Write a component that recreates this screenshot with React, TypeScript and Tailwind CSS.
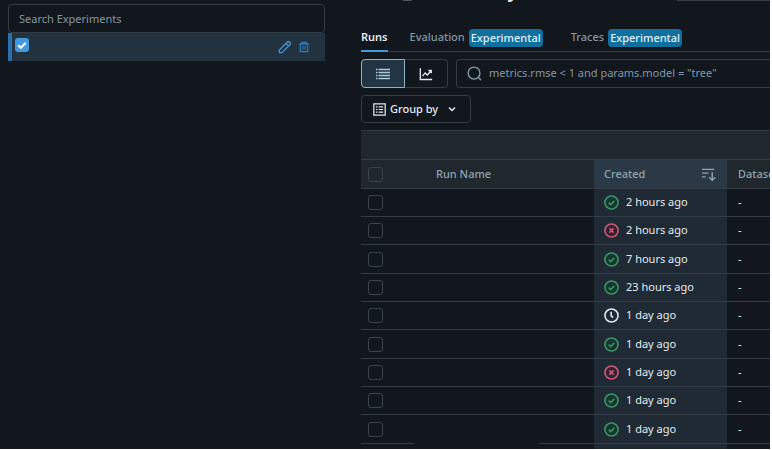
import type { ReactNode } from "react";

type Status = "ok" | "failed" | "scheduled";

const runs: { status: Status; created: string }[] = [
  { status: "ok", created: "2 hours ago" },
  { status: "failed", created: "2 hours ago" },
  { status: "ok", created: "7 hours ago" },
  { status: "ok", created: "23 hours ago" },
  { status: "scheduled", created: "1 day ago" },
  { status: "ok", created: "1 day ago" },
  { status: "failed", created: "1 day ago" },
  { status: "ok", created: "1 day ago" },
  { status: "ok", created: "1 day ago" },
];

const statusLook = {
  ok: { color: "text-[#3f9268]", fill: "#12372d", d: "M5 8.2 7.2 10.2 11 6.2" },
  failed: { color: "text-[#c9587a]", fill: "#35222f", d: "M5.8 5.8l4.4 4.4M10.2 5.8l-4.4 4.4" },
  scheduled: { color: "text-[#dfe7ec]", fill: "none", d: "M7.6 4v4.2l2 2" },
};

function StatusIcon({ status }: { status: Status }) {
  const look = statusLook[status];
  return (
    <svg viewBox="0 0 16 16" className={`size-[15px] shrink-0 ${look.color}`} fill="none" stroke="currentColor" strokeWidth="1.7" aria-hidden="true">
      <circle cx="8" cy="8" r="7" fill={look.fill} />
      <path d={look.d} />
    </svg>
  );
}

function Glyph({ className, children }: { className: string; children: ReactNode }) {
  return (
    <svg viewBox="0 0 16 16" className={`shrink-0 ${className}`} fill="none" stroke="currentColor" strokeWidth="1.5" aria-hidden="true">
      {children}
    </svg>
  );
}

function Tab({ children }: { children: string }) {
  return (
    <button className="flex shrink-0 items-center gap-1 font-medium text-[#8396a5]">
      {children}
      <span className="rounded bg-[#116f9d] px-0.5 leading-[18px] text-[#dff1fb]">Experimental</span>
    </button>
  );
}

const line = "border-b border-[#343d46]";
const checkbox = "block size-[15px] appearance-none rounded-[3px] border border-[#3b444d] bg-transparent";

export default function App() {
  return (
    <div className="h-screen overflow-hidden bg-white pr-0.5 pb-px font-['Noto_Sans','Open_Sans',sans-serif] text-[11px] text-[#e4ebf0]">
      <div className="flex h-full overflow-hidden bg-[#11171d]">
        <aside className="w-[325px] shrink-0 pt-1 pl-2">
          <input
            type="search"
            aria-label="Search Experiments"
            placeholder="Search Experiments"
            className="block h-[29px] w-full rounded border border-[#343d46] bg-transparent px-[10px] placeholder:text-[#8396a5]"
          />
          <div className="flex h-7 items-center border-l-4 border-[#2a6fae] bg-[#22323e] pr-[15px] pl-[3px]">
            <label className="relative mb-1 flex">
              <input type="checkbox" defaultChecked aria-label="Select experiment" className="size-[14px] appearance-none rounded-[3px] bg-[#4299e0]" />
              <svg viewBox="0 0 14 14" className="pointer-events-none absolute inset-0" fill="none" stroke="white" strokeWidth="2" aria-hidden="true">
                <path d="M3.2 7.2 5.8 9.8 10.8 4.8" />
              </svg>
            </label>
            <button aria-label="Rename experiment" className="ml-auto text-[#4594d6]">
              <Glyph className="size-[14px]">
                <path d="M1.5 14.5v-3L10.8 2.2a1.6 1.6 0 0 1 2.3 0l.7.7a1.6 1.6 0 0 1 0 2.3L4.5 14.5z M9.2 4l2.8 2.8" />
              </Glyph>
            </button>
            <button aria-label="Delete experiment" className="ml-1.5 text-[#3379b8]">
              <Glyph className="size-3">
                <path d="M1.5 4h13M5 4V1.7h6V4M3 4v10.3h10V4M6.3 6.5v5M9.7 6.5v5" strokeWidth="1.7" />
              </Glyph>
            </button>
          </div>
        </aside>

        <main className="ml-9 min-w-0 flex-1 overflow-hidden">
          <header className="flex h-1 items-end overflow-hidden">
            <h1 className="ml-[42px] flex gap-24 text-[20px] leading-[28px] font-semibold">
              <span>_</span>
              <span>y</span>
            </h1>
            <span className="mb-[3px] ml-auto w-[93px] border-t border-[#343d46]" />
          </header>

          <nav className={`mt-5 flex h-7 ${line}`}>
            <button className="mr-[22px] -mb-px shrink-0 border-b-2 border-[#4299e0] font-semibold">Runs</button>
            <Tab>Evaluation</Tab>
            <span className="w-7 shrink-0" />
            <Tab>Traces</Tab>
          </nav>

          <div className="mt-[7px] flex h-[29px] gap-2">
            <div className="flex w-[87px] shrink-0">
              <button aria-label="Table view" className="flex w-11 items-center justify-center rounded-l border border-[#8fb3c4] bg-[#233442] text-[#a9cbdb]">
                <Glyph className="size-4">
                  <path d="M1 3.5h1.5M1 6.5h1.5M1 9.5h1.5M1 12.5h1.5M3.5 3.5H15M3.5 6.5H15M3.5 9.5H15M3.5 12.5H15" strokeWidth="1.3" />
                </Glyph>
              </button>
              <button aria-label="Chart view" className="flex flex-1 items-center justify-center rounded-r border border-l-0 border-[#343d46]">
                <Glyph className="size-[14px]">
                  <path d="M1.5 1.5v12.8H15M4 10.5 7 6.8l2.5 2.4L14 4M10.8 4H14v3" />
                </Glyph>
              </button>
            </div>
            <label className="flex min-w-0 flex-1 items-center gap-[7px] rounded-l border border-r-0 border-[#343d46] pl-[10px] text-[#8396a5]">
              <Glyph className="size-[15px]">
                <circle cx="7.5" cy="7.5" r="6.3" />
                <path d="m12 12 3 3.2" />
              </Glyph>
              <input
                type="text"
                aria-label="Filter runs"
                placeholder={'metrics.rmse < 1 and params.model = "tree"'}
                className="min-w-0 flex-1 bg-transparent placeholder:text-[#8396a5]"
              />
            </label>
          </div>

          <button className="mt-[7px] flex h-7 w-[110px] items-center rounded border border-[#343d46] pl-[11px] font-medium">
            <Glyph className="mr-1 size-[13px]">
              <path d="M1 1h14v14H1zM3.6 4.8h2M7 4.8h5.5M3.6 8h2M7 8h5.5M3.6 11.2h2M7 11.2h5.5" />
            </Glyph>
            Group by
            <Glyph className="ml-2 size-3">
              <path d="m4 6 4 4 4-4" strokeWidth="2" />
            </Glyph>
          </button>

          <div className={`mt-[7px] h-[30px] border-t bg-[#20272d] ${line}`} />
          <table className="w-full table-fixed border-separate border-spacing-0 whitespace-nowrap">
            <colgroup>
              <col className="w-[53px]" />
              <col className="w-[125px]" />
              <col className="w-[55px]" />
              <col className="w-[133px]" />
              <col />
            </colgroup>
            <thead className="bg-[#20272d] text-left text-[#8fa3b1]">
              <tr className="h-[29px]">
                <th className={`pl-[7px] ${line}`}>
                  <input type="checkbox" aria-label="Select all runs" className={checkbox} />
                </th>
                <th className={`pl-[22px] font-medium ${line}`}>Run Name</th>
                <td className={line} />
                <th className={`bg-[#2a3945] pr-[11px] pl-[10px] font-medium ${line}`}>
                  <span className="flex items-center justify-between">
                    Created
                    <Glyph className="size-[15px]">
                      <path d="M1 2.5h13M1 6.5h7M1 10.5h4M12 5.5v8.5M8.8 11l3.2 3.2 3.2-3.2" />
                    </Glyph>
                  </span>
                </th>
                <th className={`pl-[11px] font-medium ${line}`}>Dataset</th>
              </tr>
            </thead>
            <tbody>
              {runs.map((run, i) => (
                <tr key={i} className="group h-7 nth-[3n]:h-[29px]">
                  <td className={`pl-[7px] ${line}`}>
                    <input type="checkbox" aria-label={`Select run ${i + 1}`} className={checkbox} />
                  </td>
                  <td className={`group-last:border-b-0 ${line}`} />
                  <td className={line} />
                  <td className={`bg-[#1f2a34] pl-[10px] ${line}`}>
                    <span className="flex items-center gap-[7px]">
                      <StatusIcon status={run.status} />
                      {run.created}
                    </span>
                  </td>
                  <td className={`pl-[11px] ${line}`}>-</td>
                </tr>
              ))}
            </tbody>
            <tfoot>
              <tr className="h-7">
                <td colSpan={3} />
                <td className="bg-[#1f2a34]" />
                <td />
              </tr>
            </tfoot>
          </table>
        </main>
      </div>
    </div>
  );
}
